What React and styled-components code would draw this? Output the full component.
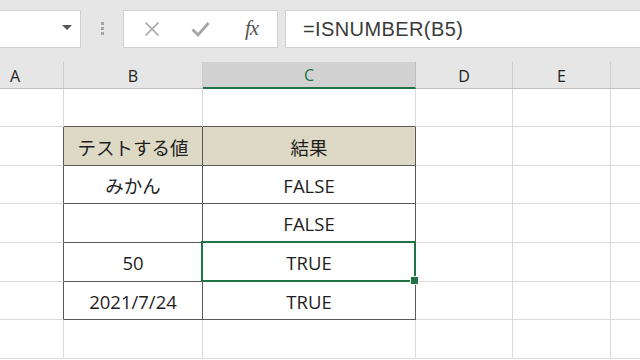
import React from 'react';
import styled, { createGlobalStyle, css } from 'styled-components';

const GlobalStyle = createGlobalStyle`
  html, body {
    margin: 0;
    padding: 0;
    background: #ffffff;
    overflow: hidden;
  }
  * {
    box-sizing: border-box;
  }
`;

const Page = styled.div`
  width: 640px;
  height: 360px;
  overflow: hidden;
  background: #ffffff;
  font-family: "Open Sans", "Noto Sans CJK JP", sans-serif;
`;

const Toolbar = styled.div`
  height: 62px;
  background: #e6e6e6;
  display: flex;
  align-items: flex-start;
  padding-top: 10px;
`;

const NameBox = styled.div`
  width: 81px;
  height: 38px;
  background: #fff;
  border: 1px solid #d0d0d0;
  border-left: none;
  display: flex;
  align-items: center;
  justify-content: flex-end;
  padding-right: 8px;
`;

const DropArrow = styled.div`
  width: 0;
  height: 0;
  border-left: 5px solid transparent;
  border-right: 5px solid transparent;
  border-top: 5px solid #555;
  margin-top: -3px;
`;

const Grip = styled.div`
  width: 42px;
  height: 38px;
  display: flex;
  flex-direction: column;
  align-items: center;
  justify-content: center;
  gap: 2px;
  margin-top: -1px;

  span {
    width: 3px;
    height: 3px;
    background: #a6a6a6;
  }
`;

const FxButtons = styled.div`
  width: 155px;
  height: 38px;
  background: #fff;
  border: 1px solid #d0d0d0;
  display: flex;
  align-items: center;
`;

const FxSlot = styled.div`
  width: 51px;
  display: flex;
  align-items: center;
  justify-content: center;
  padding-left: ${(p) => p.$pad || 0}px;
`;

const FxLabel = styled.span`
  font-family: "Liberation Serif", "DejaVu Serif", serif;
  font-style: italic;
  font-size: 21px;
  color: #555;
  letter-spacing: -1px;
  margin-top: -2px;
`;

const FormulaInput = styled.div`
  flex: 1;
  height: 38px;
  margin-left: 7px;
  background: #fff;
  border: 1px solid #d0d0d0;
  border-right: none;
  display: flex;
  align-items: center;
  padding-left: 17px;
  font-family: "Liberation Sans", "Noto Sans", sans-serif;
  font-size: 20px;
  color: #3a3a3a;
  letter-spacing: 0.4px;
`;

const Sheet = styled.div`
  margin-left: -33px;
`;

const HeaderRow = styled.div`
  display: flex;
  height: 27px;
`;

const ColHeader = styled.div`
  flex: 0 0 ${(p) => p.$w}px;
  background: ${(p) => (p.$active ? '#d2d2d2' : '#e6e6e6')};
  color: ${(p) => (p.$active ? '#217346' : '#222')};
  border-right: 1px solid ${(p) => (p.$active ? '#bdbdbd' : '#cdcdcd')};
  border-bottom: ${(p) => (p.$active ? '2px solid #217346' : '1px solid #bdbdbd')};
  display: flex;
  align-items: center;
  justify-content: center;
  font-size: 16px;
  padding-top: 1px;
`;

const Row = styled.div`
  display: flex;
  height: ${(p) => p.$h}px;
`;

const Cell = styled.div`
  position: relative;
  flex: 0 0 ${(p) => p.$w}px;
  border-right: 1px solid ${(p) => (p.$darkR ? '#595959' : '#dadada')};
  border-bottom: 1px solid ${(p) => (p.$darkB ? '#595959' : '#dadada')};
  background: ${(p) => (p.$head ? '#ddd9c4' : '#fff')};
  display: flex;
  align-items: center;
  justify-content: center;
  font-size: 18.5px;
  color: #1e1e1e;
  padding-top: 1px;

  ${(p) =>
    p.$selected &&
    css`
      &::after {
        content: '';
        position: absolute;
        left: -2px;
        top: -2px;
        right: -1px;
        bottom: -1px;
        border: 2px solid #217346;
      }
      &::before {
        content: '';
        position: absolute;
        right: -4px;
        bottom: -4px;
        width: 7px;
        height: 7px;
        background: #217346;
        border: 1px solid #fff;
        z-index: 2;
      }
    `}
`;

const columns = [
  { key: 'A', w: 97 },
  { key: 'B', w: 139 },
  { key: 'C', w: 213 },
  { key: 'D', w: 97 },
  { key: 'E', w: 98 },
  { key: 'F', w: 60 },
];

const rows = [
  { h: 38, cells: ['', '', ''] },
  { h: 39, cells: ['', 'テストする値', '結果'], head: true },
  { h: 38, cells: ['', 'みかん', 'FALSE'] },
  { h: 39, cells: ['', '', 'FALSE'] },
  { h: 39, cells: ['', '50', 'TRUE'], selected: 2 },
  { h: 38, cells: ['', '2021/7/24', 'TRUE'] },
  { h: 39, cells: ['', '', ''] },
];

const CrossIcon = () => (
  <svg width="16" height="16" viewBox="0 0 16 16">
    <path d="M1.5 1.5 L14.5 14.5 M14.5 1.5 L1.5 14.5" stroke="#a6a6a6" strokeWidth="1.6" fill="none" />
  </svg>
);

const CheckIcon = () => (
  <svg width="19" height="16" viewBox="0 0 19 16">
    <path d="M1.5 8.5 L7 14 L17.5 2" stroke="#a6a6a6" strokeWidth="2.8" fill="none" />
  </svg>
);

const App = () => {
  return (
    <Page>
      <GlobalStyle />
      <Toolbar>
        <NameBox>
          <DropArrow />
        </NameBox>
        <Grip>
          <span />
          <span />
          <span />
        </Grip>
        <FxButtons>
          <FxSlot $pad={4}>
            <CrossIcon />
          </FxSlot>
          <FxSlot>
            <CheckIcon />
          </FxSlot>
          <FxSlot>
            <FxLabel>fx</FxLabel>
          </FxSlot>
        </FxButtons>
        <FormulaInput>=ISNUMBER(B5)</FormulaInput>
      </Toolbar>
      <Sheet>
        <HeaderRow>
          {columns.map((c) => (
            <ColHeader key={c.key} $w={c.w} $active={c.key === 'C'}>
              {c.key === 'F' ? '' : c.key}
            </ColHeader>
          ))}
        </HeaderRow>
        {rows.map((r, ri) => {
          const inTable = ri >= 1 && ri <= 5;
          return (
            <Row key={ri} $h={r.h}>
              {columns.map((c, ci) => (
                <Cell
                  key={c.key}
                  $w={c.w}
                  $darkR={inTable && ci <= 2}
                  $darkB={ri <= 5 && (ci === 1 || ci === 2)}
                  $head={r.head && (ci === 1 || ci === 2)}
                  $selected={r.selected === ci}
                >
                  {r.cells[ci] || ''}
                </Cell>
              ))}
            </Row>
          );
        })}
      </Sheet>
    </Page>
  );
};

export default App;
